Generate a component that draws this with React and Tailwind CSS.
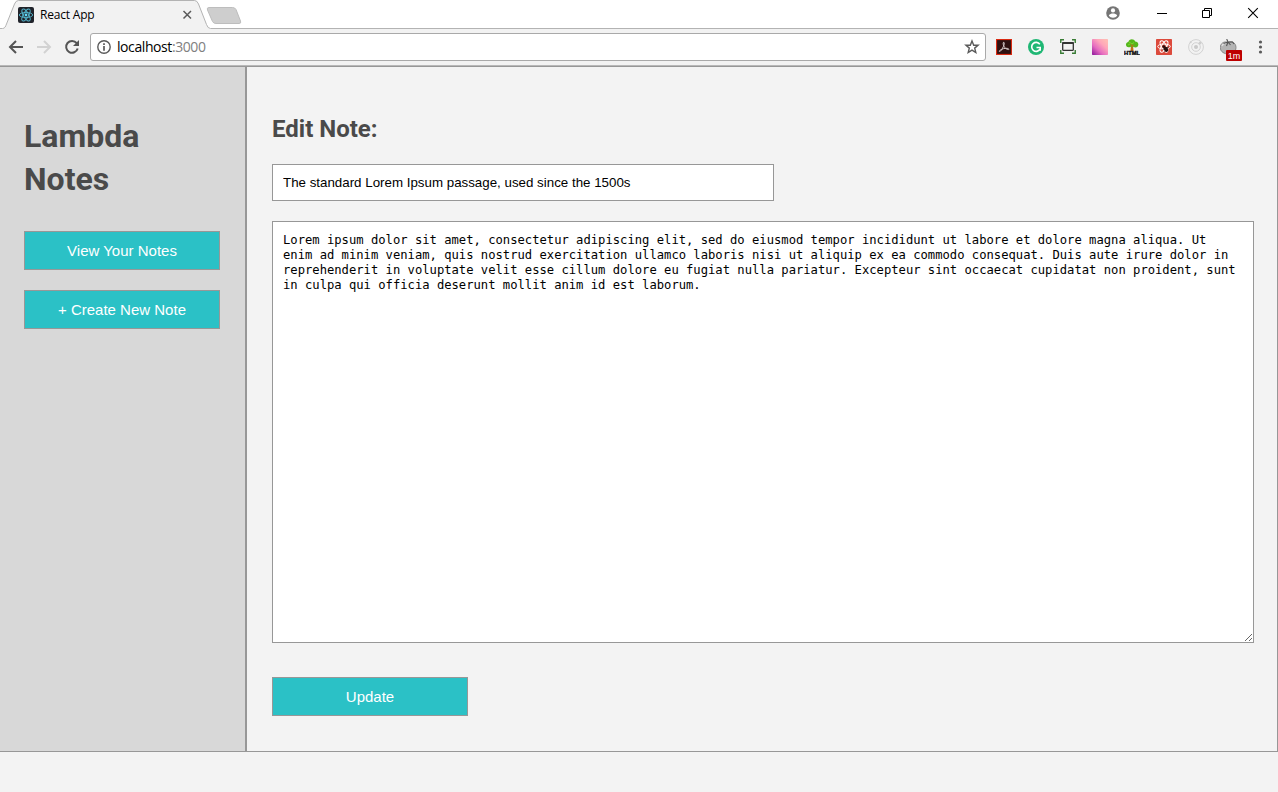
import React from 'react';

const TabShape = () => (
  <svg className="absolute left-0 top-0" width="1278" height="29" viewBox="0 0 1278 29" fill="none">
    <path d="M4 29C5.500 28 6 26 7 23.500L14.500 4Q15.800 .5 18.500 .5H194.500Q197.200 .5 198.500 4L206.500 24.500Q207.500 28.500 210 28.500V29Z" fill="#f2f2f2" />
    <path d="M0 28.500H2.500C5 28.500 5.500 26.500 6.500 24L14.500 4Q15.800 .5 18.500 .5H194.500Q197.200 .5 198.500 4L206.500 24.500Q207.800 28.500 210.500 28.500H1278" stroke="#b3b3b3" />
    <path d="M209 7.500H232.500Q235 7.500 236 9.500L240.500 21Q241.500 23.500 239 23.500H216Q213.500 23.500 212.500 21.500L207.500 10Q206.500 7.500 209 7.500Z" fill="#cecece" stroke="#bdbdbd" />
  </svg>
);

const ReactFavicon = () => (
  <svg width="16" height="16" viewBox="0 0 16 16" fill="none">
    <rect width="16" height="16" rx="2" fill="#20232a" />
    <g stroke="#53b5cd" strokeWidth=".9">
      <ellipse cx="8" cy="8" rx="6.700" ry="2.600" />
      <ellipse cx="8" cy="8" rx="6.700" ry="2.600" transform="rotate(60 8 8)" />
      <ellipse cx="8" cy="8" rx="6.700" ry="2.600" transform="rotate(120 8 8)" />
    </g>
    <circle cx="8" cy="8" r="1.400" fill="#61dafb" />
  </svg>
);

const WindowControls = () => (
  <svg width="174" height="28" viewBox="0 0 174 28" fill="none" stroke="#000">
    <circle cx="9" cy="13" r="6.800" fill="#757575" stroke="none" />
    <circle cx="9" cy="10.400" r="2.100" fill="#fff" stroke="none" />
    <path d="M4.800 15.600C5.600 14.100 7.400 13.600 9 13.600S12.400 14.100 13.200 15.600C12.300 17 10.700 17.800 9 17.800S5.700 17 4.800 15.600Z" fill="#fff" stroke="none" />
    <path d="M53 13.500H63" />
    <path d="M98.500 10.500H105.500V17.500H98.500ZM100.500 10V8.500H107.500V15.500H106" />
    <path d="M144.200 8.200L153.800 17.800M153.800 8.200L144.200 17.800" strokeWidth="1.100" />
  </svg>
);

const Back = () => (
  <svg width="16" height="16" viewBox="0 0 16 16" fill="none" stroke="#555" strokeWidth="2">
    <path d="M15 8H2.500M8 2L2 8L8 14" />
  </svg>
);

const Forward = () => (
  <svg width="16" height="16" viewBox="0 0 16 16" fill="none" stroke="#d2d2d2" strokeWidth="2">
    <path d="M1 8H13.500M8 2L14 8L8 14" />
  </svg>
);

const Reload = () => (
  <svg width="16" height="16" viewBox="0 0 16 16" fill="none">
    <path d="M12.700 4.200A5.900 5.900 0 1 0 13.700 9.500" stroke="#555" strokeWidth="2" />
    <path d="M15 1V7H9Z" fill="#555" />
  </svg>
);

const Info = () => (
  <svg width="14" height="14" viewBox="0 0 14 14" fill="none">
    <circle cx="7" cy="7" r="6.200" stroke="#5a5a5a" strokeWidth="1.400" />
    <path d="M7 6V10.700M7 3.200V4.900" stroke="#5a5a5a" strokeWidth="1.700" />
  </svg>
);

const Star = () => (
  <svg width="16" height="16" viewBox="0 0 16 16" fill="none">
    <path d="M8 2L9.700 6.300H14L10.700 9.100L11.800 13.500L8 11.100L4.200 13.500L5.300 9.100L2 6.300H6.300Z" stroke="#5a5a5a" strokeWidth="1.400" />
  </svg>
);

const Acrobat = () => (
  <svg width="16" height="16" viewBox="0 0 16 16" fill="none">
    <rect x=".5" y=".5" width="15" height="15" fill="#2d1010" stroke="#d92a12" strokeWidth="1.200" />
    <path d="M7.500 3.300C8.700 3 8.300 5.500 7.300 7.700C6.200 10.200 4.500 12.700 3.500 12.500C2.500 12 5 10.200 7.700 9.600C10 9.100 12.800 9.200 12.900 10.200C12.700 11.300 10 10.100 8.700 8.500C7.400 6.900 6.700 3.900 7.500 3.300Z" stroke="#d8cccc" strokeWidth="1" />
  </svg>
);

const Grammarly = () => (
  <svg width="16" height="16" viewBox="0 0 16 16" fill="none">
    <circle cx="8" cy="8" r="8" fill="#1fb774" />
    <path d="M11.800 5.200A4.500 4.500 0 1 0 12 10.300" stroke="#fff" strokeWidth="1.600" />
    <path d="M8.500 8.500H12.200V11.800" stroke="#fff" strokeWidth="1.600" />
  </svg>
);

const Resizer = () => (
  <svg width="16" height="16" viewBox="0 0 16 16" fill="none">
    <path d="M.75 4V.75H4M12 .75H15.250V4M15.250 11V14.250H12M4 14.250H.75V11" stroke="#397c35" strokeWidth="1.400" />
    <rect x="2.700" y="3.700" width="10.600" height="7.600" rx=".5" fill="#f2f2f2" stroke="#333" strokeWidth="1.300" />
    <path d="M2.500 4H13.500" stroke="#333" strokeWidth="2" />
  </svg>
);

const Gradient = () => (
  <svg width="16" height="16" viewBox="0 0 16 16">
    <defs>
      <linearGradient id="swatch" x1="0" y1="1" x2=".85" y2=".1">
        <stop stopColor="#8c169b" />
        <stop offset=".4" stopColor="#e56bc0" />
        <stop offset=".75" stopColor="#ffa5ba" />
        <stop offset="1" stopColor="#ffb9b5" />
      </linearGradient>
    </defs>
    <rect width="16" height="16" rx=".7" fill="url(#swatch)" />
  </svg>
);

const HtmlTree = () => (
  <svg width="16" height="16" viewBox="0 0 16 16">
    <path d="M7 6H9L9.500 12H6.500Z" fill="#c66b19" />
    <path d="M2 6C1.800 4 3.200 3.200 4.300 3C4.800 -.4 10 -1 11.200 2.500C13.200 2.600 14.800 4 14.200 6.200C13.700 8.500 11 9 9.500 7.700L8 9L6.500 7.700C4.600 9 2.300 8 2 6Z" fill="#55b71c" />
    <path d="M5 3L8 5L10 3.500M4 6L6 5" stroke="#7ed52c" fill="none" />
    <path d="M8 6.500L6.500 5.200M8 7.500L10 5.500M8 6V11" stroke="#c66b19" fill="none" />
    <text x="0" y="16" textLength="16" lengthAdjust="spacingAndGlyphs" fontSize="5.500" fontWeight="900" fontFamily="Liberation Sans, sans-serif" fill="#111" stroke="#111" strokeWidth=".4">HTML</text>
  </svg>
);

const ReactBug = () => (
  <svg width="16" height="16" viewBox="0 0 16 16" fill="none">
    <rect width="16" height="16" rx=".7" fill="#dc4a3c" />
    <g stroke="#fff" strokeWidth="1">
      <ellipse cx="8" cy="7.500" rx="6.300" ry="2.500" />
      <ellipse cx="8" cy="7.500" rx="6.300" ry="2.500" transform="rotate(60 8 7.500)" />
      <ellipse cx="8" cy="7.500" rx="6.300" ry="2.500" transform="rotate(120 8 7.500)" />
    </g>
    <ellipse cx="10" cy="10.300" rx="2" ry="2.700" transform="rotate(-35 10 10.300)" fill="#25100e" />
    <circle cx="7.700" cy="7.600" r="1.400" fill="#25100e" />
    <path d="M6.500 10.500L12.500 8.500M8.500 13L12 7.500" stroke="#25100e" strokeWidth=".7" />
  </svg>
);

const Orbit = () => (
  <svg width="16" height="16" viewBox="0 0 16 16" fill="none" stroke="#d2d2d2">
    <circle cx="8" cy="8" r="7.400" />
    <circle cx="8" cy="8" r="4.300" />
    <circle cx="8" cy="8" r="2" fill="#c9c9c9" stroke="none" />
    <circle cx="12" cy="4" r="1.500" fill="#cecece" stroke="none" />
    <circle cx="2.700" cy="3.300" r="1" fill="#cecece" stroke="none" />
  </svg>
);

const Tomato = () => (
  <svg width="24" height="24" viewBox="0 0 24 24">
    <path d="M8 3.500C12 1.500 16 4 16 8.500C16 13 12.500 15 8.500 15S.3 13 .3 8.500C.3 4.500 4 1.700 8 3.500Z" fill="#b4b4b4" stroke="#777" strokeWidth=".8" />
    <path d="M2 7C3 4.500 5 4 6 4.500" stroke="#dedede" strokeWidth="1.500" fill="none" />
    <path d="M8 3L6.700 0M8 3L3.500 4.500M8 3L12.500 3L14 5M8 3L6.500 7M8 3L10.500 6" stroke="#555" strokeWidth="1.100" fill="none" />
    <rect x="6" y="11" width="16" height="11" rx="1" fill="#bd0000" />
    <text x="14" y="19.800" textAnchor="middle" fontFamily="Liberation Sans, sans-serif" fontSize="9" fill="#fff">1m</text>
  </svg>
);

const Dots = () => (
  <svg width="5" height="16" viewBox="0 0 5 16" fill="#5a5a5a">
    <circle cx="2.500" cy="3" r="1.600" />
    <circle cx="2.500" cy="8" r="1.600" />
    <circle cx="2.500" cy="13" r="1.600" />
  </svg>
);

const Button = ({ children }) => (
  <button className="block h-[39px] w-[196px] border border-[#979797] bg-[#2bc1c6] text-[15px] leading-4 text-white">
    {children}
  </button>
);

const BODY =
  'Lorem ipsum dolor sit amet, consectetur adipiscing elit, sed do eiusmod tempor incididunt ut labore et dolore magna aliqua. Ut enim ad minim veniam, quis nostrud exercitation ullamco laboris nisi ut aliquip ex ea commodo consequat. Duis aute irure dolor in reprehenderit in voluptate velit esse cillum dolore eu fugiat nulla pariatur. Excepteur sint occaecat cupidatat non proident, sunt in culpa qui officia deserunt mollit anim id est laborum.';

export default function App() {
  return (
    <div className="flex h-[792px] w-[1278px] flex-col overflow-hidden bg-[#f3f3f3] font-['Liberation_Sans',Arial,sans-serif]">
      <div className="relative flex h-[29px] shrink-0 items-start bg-white">
        <TabShape />
        <div className="relative flex h-[29px] w-[193px] items-center pl-[18px]">
          <ReactFavicon />
          <span className="ml-1.5 grow font-['Open_Sans',sans-serif] text-[12px] leading-4 tracking-[-0.2px] text-black">React App</span>
          <svg width="11" height="10" viewBox="0 0 11 10" className="mt-px" stroke="#5a5a5a" strokeWidth="1.500">
            <path d="M1.500 1L9 8.500M9 1L1.500 8.500" />
          </svg>
        </div>
        <div className="relative ml-auto">
          <WindowControls />
        </div>
      </div>

      <div className="flex h-[37px] shrink-0 items-center border-b border-[#b8b8b8] bg-[#f2f2f2] pl-2">
        <div className="flex w-[82px] gap-3">
          <Back />
          <Forward />
          <Reload />
        </div>
        <div className="flex h-7 w-[896px] items-center rounded-[3px] border border-[#a9a9a9] bg-white pl-1.5 pr-[5px]">
          <Info />
          <span className="ml-1.5 grow font-['Open_Sans',sans-serif] text-[14px] leading-5 tracking-[-0.42px] text-black">
            localhost<span className="text-[#808080]">:3000</span>
          </span>
          <Star />
        </div>
        <div className="ml-2.5 flex h-4 gap-4">
          <Acrobat />
          <Grammarly />
          <Resizer />
          <Gradient />
          <HtmlTree />
          <ReactBug />
          <Orbit />
          <Tomato />
        </div>
        <div className="ml-[14px]">
          <Dots />
        </div>
      </div>

      <div className="flex h-[686px] shrink-0 border-y border-r border-[#979797]">
        <aside className="w-[247px] shrink-0 border-r-2 border-[#979797] bg-[#d8d8d8] pl-6 pt-12">
          <h1 className="w-[196px] font-['Roboto',sans-serif] text-[32px] font-bold leading-[43px] text-[#4a4a4a]">
            Lambda
            <br />
            Notes
          </h1>
          <div className="mt-[30px] flex flex-col gap-5">
            <Button>View Your Notes</Button>
            <Button>+ Create New Note</Button>
          </div>
        </aside>
        <main className="flex grow flex-col pl-[25px] pr-[23px] pt-[46px]">
          <h2 className="font-['Roboto',sans-serif] text-[24px] font-bold leading-8 text-[#4a4a4a]">Edit Note:</h2>
          <input
            className="mt-[19px] h-[37px] w-[502px] border border-[#979797] bg-white px-2.5 text-[13.333px] text-black outline-none"
            defaultValue="The standard Lorem Ipsum passage, used since the 1500s"
          />
          <textarea
            className="mt-5 h-[422px] w-[982px] resize border border-[#979797] bg-white py-[11px] pl-2.5 pr-4 font-['DejaVu_Sans_Mono',monospace] text-[12.18px] leading-[15px] text-black outline-none"
            spellCheck={false}
            defaultValue={BODY}
          />
          <div className="mt-[34px]">
            <Button>Update</Button>
          </div>
        </main>
      </div>
    </div>
  );
}
